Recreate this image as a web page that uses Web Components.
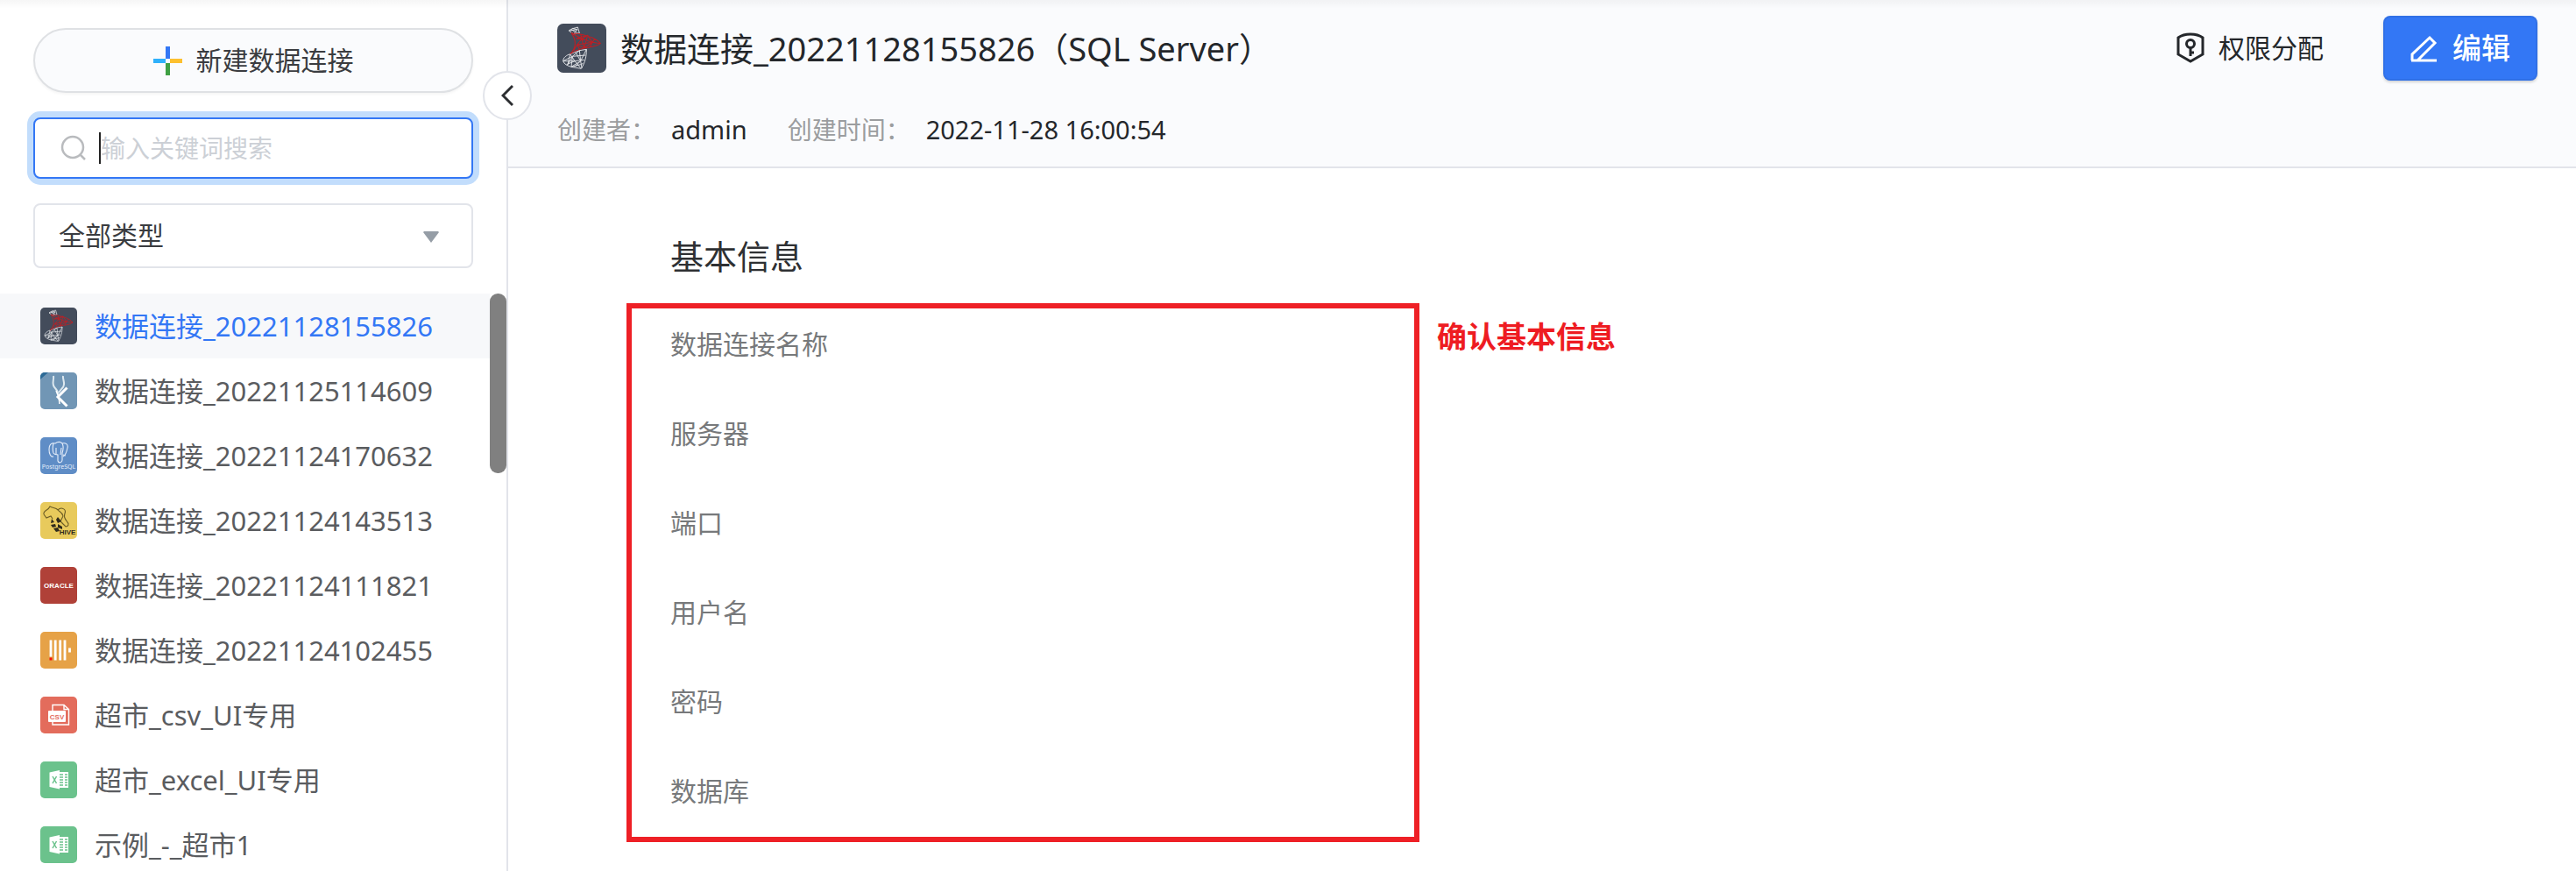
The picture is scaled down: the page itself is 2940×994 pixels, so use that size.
<!DOCTYPE html>
<html lang="zh-CN">
<head>
<meta charset="utf-8">
<title>数据连接</title>
<style>
  html, body { margin: 0; height: 100%; }
  body {
    --line: #e2e4ea; --blue: #3377f5; --ink: #3a3c40; --deep: #24272b; --muted: #8c8c8c;
    font-family: "Noto Sans", "Noto Sans CJK SC", sans-serif;
    font-size: 30px; line-height: 40px; color: var(--ink); background: #fff;
  }
</style>
</head>
<body>
<data-page>
  <side-panel slot="side">
    <connection-item kind="mssql" selected>数据连接_20221128155826</connection-item>
    <connection-item kind="kudu">数据连接_20221125114609</connection-item>
    <connection-item kind="postgres">数据连接_20221124170632</connection-item>
    <connection-item kind="hive">数据连接_20221124143513</connection-item>
    <connection-item kind="oracle">数据连接_20221124111821</connection-item>
    <connection-item kind="clickhouse">数据连接_20221124102455</connection-item>
    <connection-item kind="csv">超市_csv_UI专用</connection-item>
    <connection-item kind="excel">超市_excel_UI专用</connection-item>
    <connection-item kind="excel">示例_-_超市1</connection-item>
  </side-panel>
  <page-header kind="mssql">
    <span slot="title">数据连接_20221128155826（SQL Server）</span>
    <span slot="owner">admin</span>
    <span slot="time">2022-11-28 16:00:54</span>
  </page-header>
  <basic-info></basic-info>
</data-page>

<script>
const svg = (inner) => `<svg viewBox="0 0 42 42" width="100%" height="100%" aria-hidden="true">${inner}</svg>`;
const tile = (color) => `<rect width="42" height="42" rx="5" fill="${color}"/>`;
const excel = svg(`${tile('#6bc28c')}
  <path d="M20 12h12v18H20z" fill="#fff"/>
  <path d="M22 15h4m2 0h3M22 18h4m2 0h3M22 21h4m2 0h3M22 24h4m2 0h3M22 27h4m2 0h3" stroke="#6bc28c" stroke-width="1.4"/>
  <path d="M10.500 12.500 22 10v21.500l-11.500-2.500z" fill="#fff"/>
  <path d="m14 17 4.500 8M18.500 17 14 25" stroke="#6bc28c" stroke-width="1.500"/>`);
const LOGOS = {
  mssql: svg(`${tile('#434c5b')}
    <g fill="none" stroke="#e4e6e9" stroke-width=".7">
      <path d="M10 6c2-2 5-2 7.500-3L19 8M10 6l4 3 5-1M10 6l7-1-3 4M12 5l5 3M13 4l4 1"/>
      <path d="M11 26c-3 1-6 3-6 6 1 3 4 4 7 5l8.500 1.500C24 33 25 28 25 22M11 26l8-3 6-1M5 32l8-4 11-1M8 35l7-3 8-1M12 37l8-2 2-1M11 26l-2 9M11 26l4 6 5 6M19 23l-6 5-4 7M19 23l1 9-8 5M25 22l-5 10 1 6M13 28l-1 9M16 25l4 7-5 5M5 32l10 0"/>
    </g>
    <g fill="none" stroke="#bd1f24" stroke-width=".8">
      <path d="M12 8c2 1 5 0 8 1 7 2 13 3 17 8-4 3-9 3-14 4-5 1-9 3-12 5 5-5 6-11 1-18zM12 8l9 5 5-3 4 6 7 1M16 13l5 0 2 8M16 13l10-3M17 18l4-5 9 3-7 5-6-3M20 9l1 4M26 10l-3 11M32 13l-2 3-2 4M14 23l3-5 13-2M17 18l2 4"/>
    </g>`),
  kudu: svg(`${tile('#7196b5')}
    <path d="M0 8V5a5 5 0 0 1 5-5h4z" fill="#2c6a96"/>
    <path d="M15 4c1 5-3 9 2 14 2 2 3 4 3 7M26 4c-1 5 4 9-1 14l-4 5" fill="none" stroke="#dce8ef" stroke-width="2"/>
    <path d="m18 21 3 7 1 8" fill="none" stroke="#fff" stroke-width="1.500"/>
    <path d="M30.500 17.500 20 28l10.500 10.500" fill="none" stroke="#fff" stroke-width="3"/>`),
  postgres: svg(`${tile('#5f8dc6')}
    <path d="M15 22c-3 1-5-3-5-8 0-6 3-8 7-7 3-2 6-2 8 0 4-1 7 1 6 5-1 5-3 9-5 10M15 7c-1 4-1 8 0 11 2 3 4 1 5 2v7c1 3 5 2 5-1v-8c1-3 2-7 0-11M18 12v8m6-8-1 8m3 0 3 1" fill="none" stroke="#e6eefa" stroke-width="1.100"/>
    <text x="21" y="36" font-size="7" text-anchor="middle" fill="#e6eefa" font-family="Noto Sans, sans-serif">PostgreSQL</text>`),
  hive: svg(`${tile('#e8ca5c')}
    <path d="M4 14c-1-5 5-4 7-9 3 2 7 1 9 4 4-4 10-1 8 4-1 3-1 5 3 10 2 2 1 5-2 5l-4-4M4 14l3 4 5-2 2 3M19 8c2 3 6 3 7 8l-3 6 3 3" fill="none" stroke="#6b5c25" stroke-width="1.100"/>
    <path d="m13 19 3 4-4 1zm-1 7 5-1 1 3-4 1zm8-9 4 5-4 2-2-4zm-5 13 5-1 2 4-4 1zm5-5 5 3v3l-5-2z" fill="#2f2b1c"/>
    <text x="31" y="37" font-size="8" font-weight="700" text-anchor="middle" fill="#2f2b1c" font-family="Liberation Sans, sans-serif">HIVE</text>`),
  oracle: svg(`${tile('#b04138')}
    <text x="21" y="23.500" font-size="8" font-weight="700" text-anchor="middle" fill="#fff" font-family="Liberation Sans, sans-serif">ORACLE</text>`),
  clickhouse: svg(`${tile('#e6a247')}
    <path d="M12 9.500v19M17.200 9.500v23M22.700 9.500v23M28 9.500v23M33.500 18.500v5" stroke="#fff" stroke-width="2.800"/>
    <path d="M12 29.500v3" stroke="#f5140f" stroke-width="3"/>`),
  csv: svg(`${tile('#e36c5c')}
    <path d="M14 17V9.500h13l5.500 5V32H14v-3M27 9.500v5h5" fill="none" stroke="#fff" stroke-width="1.400"/>
    <rect x="9" y="16" width="20" height="13" rx="1" fill="#fff"/>
    <text x="19" y="25.500" font-size="8" font-weight="700" text-anchor="middle" fill="#e36c5c" font-family="Liberation Sans, sans-serif">CSV</text>`),
  excel
};

function define(name, render) {
  customElements.define(name, class extends HTMLElement {
    connectedCallback() {
      if (this.shadowRoot) return;
      this.attachShadow({ mode: 'open' }).innerHTML = render(this);
    }
  });
}

define('data-page', () => `
  <style>
    :host { display: flex; height: 100vh; position: relative; overflow: hidden; }
    :host::before { content: ""; position: absolute; inset: 0 0 auto; height: 10px; z-index: 2;
      background: linear-gradient(rgba(0,0,0,.035), rgba(0,0,0,0)); }
    main { flex: 1; min-width: 0; }
  </style>
  <slot name="side"></slot><main><slot></slot></main>`);

define('side-panel', () => `
  <style>
    :host { position: relative; z-index: 1; display: flex; flex-direction: column; flex: none; width: 578px; border-right: 2px solid var(--line); }
    .tools { display: flex; flex-direction: column; padding: 32px 38px 29px; }
    button, input, select { font: inherit; color: inherit; box-sizing: border-box; margin: 0; }
    .new { display: flex; align-items: center; justify-content: center; gap: 16px; height: 74px;
      border: 2px solid #dfe1e4; border-radius: 37px; background: #fafbfd; box-shadow: 0 2px 3px rgba(0,0,0,.04); }
    .search, .type { position: relative; display: flex; }
    .search { margin: 28px 0; }
    input { width: 100%; height: 70px; padding: 0 20px 0 75px; font-size: 28px; border: 2px solid var(--blue);
      border-radius: 8px; background: #fff; box-shadow: 0 0 0 7px #c2ddfc; outline: none; caret-color: transparent; }
    input::placeholder { color: #ccd0d6; opacity: 1; }
    .search svg { position: absolute; left: 31px; top: 20px; }
    .caret { position: absolute; left: 75px; top: 17px; width: 2px; height: 36px; background: #222; }
    select { width: 100%; height: 74px; padding: 0 27px; border: 2px solid var(--line); border-radius: 8px;
      background: #fff; appearance: none; }
    .type svg { position: absolute; right: 39px; top: 32px; pointer-events: none; }
    .scroller { display: flex; flex: 1; min-height: 0; }
    .list { flex: 1; overflow: hidden; }
    .track { width: 19px; }
    .thumb { height: 205px; border-radius: 9px; background: #808080; }
    .fold { position: absolute; right: -29px; top: 81px; width: 56px; height: 56px; padding: 0; border: 2px solid var(--line);
      border-radius: 50%; background: #fff; display: grid; place-items: center; }
  </style>
  <div class="tools">
    <button class="new" type="button">
      <svg width="33" height="33" viewBox="0 0 33 33" aria-hidden="true"><path d="M14 0h5v14h-5z" fill="#3377f5"/><path d="M19 14h14v5H19z" fill="#fdc02f"/><path d="M14 19h5v14h-5z" fill="#3fa044"/><path d="M0 14h14v5H0z" fill="#2fb0fb"/></svg>
      新建数据连接
    </button>
    <div class="search">
      <input type="text" aria-label="搜索" placeholder="输入关键词搜索">
      <svg width="30" height="30" viewBox="0 0 30 30" fill="none" stroke="#b9bbbe" stroke-width="2.500" aria-hidden="true"><circle cx="14" cy="14" r="12"/><path d="m22 22 6 6"/></svg>
      <span class="caret"></span>
    </div>
    <div class="type">
      <select aria-label="类型"><option>全部类型</option></select>
      <svg width="18" height="13" viewBox="0 0 18 13" aria-hidden="true"><path d="M1 0h16l1 1-9 12L0 1z" fill="#959da6"/></svg>
    </div>
  </div>
  <div class="scroller"><div class="list"><slot></slot></div><div class="track"><div class="thumb"></div></div></div>
  <button class="fold" type="button" aria-label="收起">
    <svg width="14" height="28" viewBox="0 0 14 28" fill="none" stroke="#2c2e31" stroke-width="3" aria-hidden="true"><path d="M13 3 2 14l11 11"/></svg>
  </button>`);

define('connection-item', (el) => `
  <style>
    :host { display: block; }
    a { display: flex; align-items: center; gap: 20px; height: 74px; padding-left: 46px; color: #5a5c5f;
      font-size: 31px; text-decoration: none; white-space: nowrap; }
    :host([selected]) a { background: #f7f8fa; color: var(--blue); }
    .logo { display: flex; width: 42px; height: 42px; }
  </style>
  <a href="#"><span class="logo">${LOGOS[el.getAttribute('kind')]}</span><span><slot></slot></span></a>`);

define('page-header', (el) => `
  <style>
    :host { display: flex; justify-content: space-between; align-items: flex-start; padding: 18px 44px 22px 56px;
      background: #fafbfd; border-bottom: 2px solid var(--line); color: var(--deep); }
    .name { display: flex; align-items: center; gap: 16px; height: 74px; }
    .logo { display: flex; width: 56px; height: 56px; }
    h1 { margin: 0; font-size: 38px; line-height: 56px; font-weight: 400; white-space: nowrap; }
    dl { display: flex; align-items: baseline; margin: 36px 0 0; font-size: 28px; white-space: nowrap; }
    dt { color: #9b9d9f; }
    dd { margin: 0 46px 0 18px; font-size: 29px; }
    .actions { display: flex; gap: 68px; }
    button { display: flex; align-items: center; height: 74px; padding: 0; border: 0; background: none; font: inherit; color: inherit; }
    .grant { gap: 16px; }
    .edit { gap: 17px; width: 176px; justify-content: center; font-size: 33px; font-weight: 500; color: #fff; background: var(--blue);
      border-radius: 8px; box-shadow: inset 0 0 0 2px rgba(0,0,0,.06), 0 2px 3px rgba(0,0,0,.16); }
  </style>
  <div>
    <div class="name"><span class="logo">${LOGOS[el.getAttribute('kind')]}</span><h1><slot name="title"></slot></h1></div>
    <dl><dt>创建者：</dt><dd><slot name="owner"></slot></dd><dt>创建时间：</dt><dd><slot name="time"></slot></dd></dl>
  </div>
  <div class="actions">
    <button class="grant" type="button">
      <svg width="32" height="36" viewBox="0 0 32 36" fill="none" stroke="#24272b" stroke-width="3" aria-hidden="true"><path d="M16 2c5 0 10 1 14 4v19l-14 8L2 25V6c4-3 9-4 14-4z"/><circle cx="16" cy="13" r="4.500"/><path d="M16 17v10m0-4h4"/></svg>
      权限分配
    </button>
    <button class="edit" type="button">
      <svg width="31" height="31" viewBox="0 0 31 31" fill="none" stroke="#fff" stroke-width="3" aria-hidden="true"><path d="M2 29v-7L22 3l6 6L8 29M1 29h29"/></svg>
      编辑
    </button>
  </div>`);

define('basic-info', () => `
  <style>
    :host { display: block; padding: 72px 44px 33px 135px; }
    h2 { margin: 0 0 26px 50px; font-size: 38px; line-height: 56px; font-weight: 400; color: #2e3033; }
    .row { display: flex; align-items: flex-start; gap: 20px; }
    dl { display: grid; gap: 62px; flex: none; box-sizing: border-box; width: 905px; margin: 0; padding: 21px 44px 32px; border: 6px solid #ee2026; }
    dt { color: #77797b; }
    p { margin: 18px 0 0; font-size: 34px; font-weight: 700; color: #ee1c22; }
  </style>
  <h2>基本信息</h2>
  <div class="row">
    <dl><dt>数据连接名称</dt><dt>服务器</dt><dt>端口</dt><dt>用户名</dt><dt>密码</dt><dt>数据库</dt></dl>
    <p>确认基本信息</p>
  </div>`);
</script>
</body>
</html>
